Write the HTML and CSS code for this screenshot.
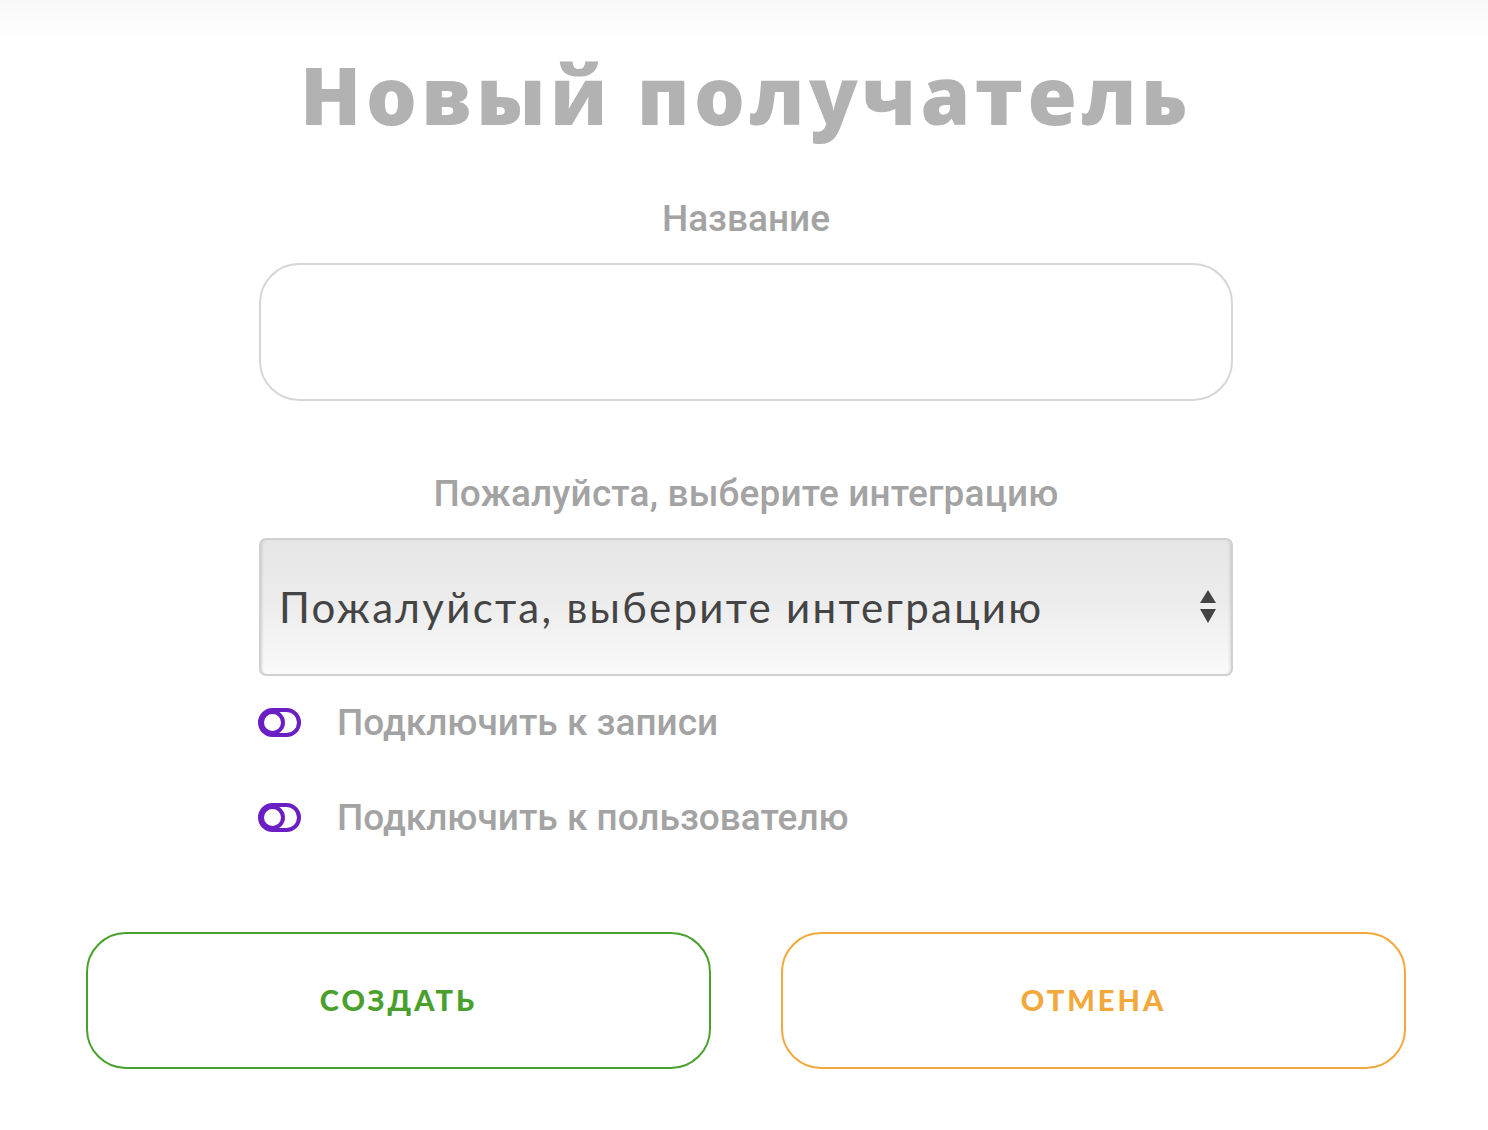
FILE: index.html
```html
<!DOCTYPE html>
<html lang="ru">
<head>
<meta charset="utf-8">
<title>Новый получатель</title>
<link rel="stylesheet" href="styles.css">
</head>
<body>
<div class="page">
  <h1 class="title">Новый получатель</h1>
  <form class="form">
    <label class="field-label" for="name">Название</label>
    <input class="text-input" id="name" type="text">

    <label class="field-label field-label--select" for="integration">Пожалуйста, выберите интеграцию</label>
    <div class="select-wrap">
      <select class="select" id="integration">
        <option>Пожалуйста, выберите интеграцию</option>
      </select>
      <svg class="select-arrows" width="16" height="34" viewBox="0 0 16 34" aria-hidden="true">
        <path d="M8 0 L16 13 L0 13 Z" fill="#444"/>
        <path d="M0 19 L16 19 L8 33 Z" fill="#444"/>
      </svg>
    </div>

    <div class="toggles">
      <div class="toggle-row">
        <svg class="toggle-icon" width="43" height="29" viewBox="0 0 43 29" aria-hidden="true">
          <rect x="2" y="2" width="39" height="25" rx="12.5" fill="none" stroke="#6a1fc4" stroke-width="4"/>
          <circle cx="14.5" cy="14.5" r="10.5" fill="#fff" stroke="#6a1fc4" stroke-width="4"/>
        </svg>
        <span class="toggle-text">Подключить к записи</span>
      </div>
      <div class="toggle-row">
        <svg class="toggle-icon" width="43" height="29" viewBox="0 0 43 29" aria-hidden="true">
          <rect x="2" y="2" width="39" height="25" rx="12.5" fill="none" stroke="#6a1fc4" stroke-width="4"/>
          <circle cx="14.5" cy="14.5" r="10.5" fill="#fff" stroke="#6a1fc4" stroke-width="4"/>
        </svg>
        <span class="toggle-text">Подключить к пользователю</span>
      </div>
    </div>
  </form>
  <div class="actions">
    <button class="btn btn--create" type="button">СОЗДАТЬ</button>
    <button class="btn btn--cancel" type="button">ОТМЕНА</button>
  </div>
</div>
</body>
</html>
```

FILE: styles.css
```css
* { box-sizing: border-box; }

html, body {
  margin: 0;
  padding: 0;
}

body {
  background: linear-gradient(to bottom, #f8f8f8 0px, #ffffff 45px) no-repeat;
  background-color: #fff;
  min-height: 1130px;
  font-family: Roboto, "Liberation Sans", sans-serif;
}

.page {
  width: 1320px;
  margin-left: calc(50% - 658px);
  padding-top: 44px;
}

.title {
  margin: 0;
  text-align: center;
  font-family: "Open Sans", "Liberation Sans", sans-serif;
  font-weight: 800;
  font-size: 80px;
  line-height: 100px;
  color: #b2b2b2;
  letter-spacing: 4.5px;
}

.form {
  width: 974px;
  margin: 0 auto;
  display: flex;
  flex-direction: column;
}

.field-label {
  display: block;
  text-align: center;
  font-family: Roboto, "Liberation Sans", sans-serif;
  font-weight: 500;
  font-size: 37px;
  line-height: 40px;
  color: #a3a3a3;
  margin-top: 55px;
  margin-bottom: 24px;
}

.field-label--select {
  margin-top: 73px;
  margin-bottom: 24px;
  letter-spacing: 0.15px;
}

.text-input {
  display: block;
  width: 974px;
  height: 138px;
  border: 2px solid #d6d6d6;
  border-radius: 40px;
  background: #fff;
  outline: none;
  font-size: 32px;
  padding: 0 24px;
}

.select-wrap {
  position: relative;
  width: 974px;
  height: 138px;
}

.select {
  -webkit-appearance: none;
  appearance: none;
  display: block;
  width: 100%;
  height: 100%;
  border: 2px solid #d0d0d0;
  border-radius: 7px;
  background: linear-gradient(to bottom, #e6e6e6 0%, #ececec 45%, #fafafa 100%);
  box-shadow: inset 3px 0 3px -2px rgba(0,0,0,0.12), inset -3px 0 3px -2px rgba(0,0,0,0.12);
  font-family: Lato, "Noto Sans", sans-serif;
  font-size: 42px;
  color: #444;
  padding: 0 18px;
  letter-spacing: 2.3px;
  outline: none;
}

.select-arrows {
  position: absolute;
  right: 17px;
  top: 52px;
}

.toggles {
  display: flex;
  flex-direction: column;
  gap: 52px;
  margin-top: 25px;
}

.toggle-row {
  display: flex;
  align-items: center;
  height: 43px;
  margin-left: -1px;
}

.toggle-icon {
  flex: none;
}

.toggle-text {
  margin-left: 36px;
  font-family: Roboto, "Liberation Sans", sans-serif;
  font-weight: 500;
  font-size: 37px;
  color: #a3a3a3;
}

.actions {
  display: flex;
  justify-content: space-between;
  margin-top: 93px;
}

.btn {
  width: 625px;
  height: 137px;
  background: #fff;
  border: 2px solid;
  border-radius: 40px;
  font-family: Lato, "Noto Sans", sans-serif;
  font-weight: 900;
  font-size: 29px;
  letter-spacing: 3px;
  padding-bottom: 4px;
  cursor: pointer;
}

.btn--create {
  border-color: #4aa02c;
  color: #4aa02c;
}

.btn--cancel {
  border-color: #f2a83a;
  color: #f2a83a;
}
```
